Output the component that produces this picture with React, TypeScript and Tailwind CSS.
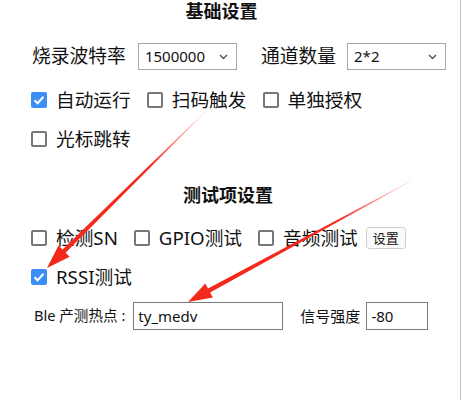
import React from "react";

type Pt = [number, number];

function arrowPoints(start: Pt, tip: Pt) {
  const dx = tip[0] - start[0];
  const dy = tip[1] - start[1];
  const len = Math.hypot(dx, dy);
  const ux = dx / len;
  const uy = dy / len;
  const nx = -uy;
  const ny = ux;
  const headLen = 24;
  const bx = tip[0] - ux * headLen;
  const by = tip[1] - uy * headLen;
  const p = (x: number, y: number) => `${x.toFixed(1)},${y.toFixed(1)}`;
  return [
    p(start[0] + nx * 0.3, start[1] + ny * 0.3),
    p(bx + nx * 2.2, by + ny * 2.2),
    p(bx + nx * 8, by + ny * 8),
    p(tip[0], tip[1]),
    p(bx - nx * 8, by - ny * 8),
    p(bx - nx * 2.2, by - ny * 2.2),
    p(start[0] - nx * 0.3, start[1] - ny * 0.3),
  ].join(" ");
}

function Checkbox({ checked, label }: { checked?: boolean; label: string }) {
  return (
    <div className="flex items-center gap-[9px]">
      {checked ? (
        <span className="w-[16px] h-[16px] rounded-[2px] bg-[#3a8ef5] flex items-center justify-center">
          <svg width="12" height="10" viewBox="0 0 12 10">
            <path d="M1.5 5.2 L4.6 8.2 L10.5 1.8" fill="none" stroke="white" strokeWidth="2" />
          </svg>
        </span>
      ) : (
        <span className="w-[16px] h-[16px] rounded-[2px] border-2 border-[#767676] bg-white" />
      )}
      <span className="text-[18.7px] leading-[24px] text-[#111]">{label}</span>
    </div>
  );
}

function Select({ value }: { value: string }) {
  return (
    <div className="w-[99px] h-[27px] border border-[#a8a8a8] bg-white flex items-center justify-between pl-[6px] pr-[8px]">
      <span className="text-[15px] text-[#111]">{value}</span>
      <svg width="9" height="6" viewBox="0 0 9 6">
        <path d="M1 1 L4.5 4.5 L8 1" fill="none" stroke="#555" strokeWidth="1.4" />
      </svg>
    </div>
  );
}

export default function App() {
  const a1 = arrowPoints([206, 111], [47, 268]);
  const a2 = arrowPoints([413, 180], [188, 302]);

  return (
    <div className="w-[461px] h-[400px] bg-white font-['Noto_Sans','Noto_Sans_CJK_SC',sans-serif] text-[#111] overflow-hidden">
      <div className="relative w-[461px] h-[400px] border-r border-[#c4c4c4]">
        <div className="pt-[1px] h-[21px] flex items-center justify-center pr-[17px]">
          <span className="text-[18px] leading-[20px] font-bold">基础设置</span>
        </div>

        <div className="mt-[22px] h-[27px] flex items-center pl-[32px]">
          <span className="text-[18.8px]">烧录波特率</span>
          <div className="ml-[12px]">
            <Select value="1500000" />
          </div>
          <span className="text-[18.8px] ml-[24px]">通道数量</span>
          <div className="ml-[11px]">
            <Select value="2*2" />
          </div>
        </div>

        <div className="mt-[18px] h-[24px] flex items-center gap-[16px] pl-[31px]">
          <Checkbox checked label="自动运行" />
          <Checkbox label="扫码触发" />
          <Checkbox label="单独授权" />
        </div>

        <div className="mt-[15px] h-[24px] flex items-center pl-[31px]">
          <Checkbox label="光标跳转" />
        </div>

        <div className="mt-[34px] h-[20px] flex items-center justify-center pr-[4px]">
          <span className="text-[18px] leading-[20px] font-bold">测试项设置</span>
        </div>

        <div className="mt-[21px] h-[24px] flex items-center gap-[16px] pl-[31px]">
          <Checkbox label="检测SN" />
          <Checkbox label="GPIO测试" />
          <div className="flex items-center gap-[8px]">
            <Checkbox label="音频测试" />
            <button className="h-[22px] px-[6px] border border-[#cfcfcf] rounded-[3px] bg-[#fafafa] text-[13px] leading-none">
              设置
            </button>
          </div>
        </div>

        <div className="mt-[15px] h-[24px] flex items-center pl-[31px]">
          <Checkbox checked label="RSSI测试" />
        </div>

        <div className="mt-[13px] h-[28px] flex items-center pl-[34px]">
          <span className="text-[14.6px]">Ble 产测热点 :</span>
          <div className="ml-[8px] w-[150px] h-[28px] border border-[#7a7a7a] flex items-center pl-[4px]">
            <span className="text-[15px]">ty_medv</span>
          </div>
          <span className="text-[15px] ml-[17px]">信号强度</span>
          <div className="ml-[6px] w-[62px] h-[28px] border border-[#7a7a7a] flex items-center pl-[4px]">
            <span className="text-[15px]">-80</span>
          </div>
        </div>

        <svg className="absolute left-0 top-0 pointer-events-none" width="461" height="400">
          <defs>
            <linearGradient id="g1" gradientUnits="userSpaceOnUse" x1="206" y1="111" x2="150" y2="166">
              <stop offset="0" stopColor="#ff3b2f" stopOpacity="0.1" />
              <stop offset="1" stopColor="#f5281c" stopOpacity="1" />
            </linearGradient>
            <linearGradient id="g2" gradientUnits="userSpaceOnUse" x1="413" y1="180" x2="340" y2="220">
              <stop offset="0" stopColor="#ff3b2f" stopOpacity="0.1" />
              <stop offset="1" stopColor="#f5281c" stopOpacity="1" />
            </linearGradient>
          </defs>
          <polygon points={a1} fill="url(#g1)" />
          <polygon points={a2} fill="url(#g2)" />
        </svg>
      </div>
    </div>
  );
}
